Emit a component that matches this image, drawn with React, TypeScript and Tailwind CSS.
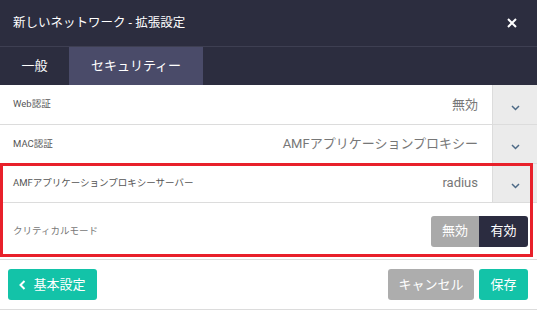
import React, { useState } from "react";

const font = { fontFamily: "Roboto, 'Noto Sans CJK JP', sans-serif" };

const Chevron: React.FC = () => (
  <svg width="9" height="6" viewBox="0 0 9 6" fill="none">
    <polyline points="1,1 4.5,4.5 8,1" stroke="#4d6a86" strokeWidth="1.5" />
  </svg>
);

const SelectRow: React.FC<{ label: string; value: string; h: string }> = ({ label, value, h }) => (
  <div className={`flex ${h} border-b border-[#dcdcdc]`}>
    <div className="flex-1 flex items-center justify-between pl-[13px] pr-[14px]">
      <span className="text-[9.5px] text-[#555]">{label}</span>
      <span className="text-[13px] text-[#777]">{value}</span>
    </div>
    <div className="w-[45px] bg-[#ebebeb] border-l border-[#dcdcdc] flex items-center justify-center pt-[6px]">
      <Chevron />
    </div>
  </div>
);

const App: React.FC = () => {
  const [tab, setTab] = useState(1);
  const [critical, setCritical] = useState(true);

  return (
    <div className="relative w-[537px] h-[310px] bg-white overflow-hidden" style={font}>
      <div className="h-[47px] bg-[#2c2d3f] border-b border-[#3e3f52] flex items-center justify-between pl-[13px] pr-[20px]">
        <span className="text-[12.5px] text-white">新しいネットワーク - 拡張設定</span>
        <svg width="10" height="10" viewBox="0 0 10 10">
          <path d="M1 1L9 9M9 1L1 9" stroke="white" strokeWidth="2" />
        </svg>
      </div>

      <div className="h-[38px] bg-[#2c2d3f] flex">
        {["一般", "セキュリティー"].map((t, i) => (
          <button
            key={t}
            onClick={() => setTab(i)}
            className={`h-full text-[13px] text-white ${i === 0 ? "w-[69px]" : "w-[134px]"} ${
              tab === i ? "bg-[#4a4b69]" : ""
            }`}
          >
            {t}
          </button>
        ))}
      </div>

      <SelectRow label="Web認証" value="無効" h="h-[40px]" />
      <SelectRow label="MAC認証" value="AMFアプリケーションプロキシー" h="h-[39px]" />
      <SelectRow label="AMFアプリケーションプロキシーサーバー" value="radius" h="h-[39px]" />

      <div className="h-[56px] flex items-center justify-between pl-[13px] pr-[9px]">
        <span className="text-[9.5px] text-[#777]">クリティカルモード</span>
        <div className="flex rounded-[3px] overflow-hidden h-[31px] text-[13px] text-white">
          <button
            onClick={() => setCritical(false)}
            className={`w-[48px] ${critical ? "bg-[#a9a9a9]" : "bg-[#2b2c40]"}`}
          >
            無効
          </button>
          <button
            onClick={() => setCritical(true)}
            className={`w-[49px] ${critical ? "bg-[#2b2c40]" : "bg-[#a9a9a9]"}`}
          >
            有効
          </button>
        </div>
      </div>

      <div className="h-[51px] border-t border-b border-[#dcdcdc] flex items-center justify-between pl-[8px] pr-[9px]">
        <button className="h-[31px] w-[89px] rounded-[3px] bg-[#13c3a8] text-white text-[13px] flex items-center justify-center gap-[7px]">
          <svg width="7" height="10" viewBox="0 0 7 10">
            <polyline points="5.5,1 1.5,5 5.5,9" fill="none" stroke="white" strokeWidth="2" />
          </svg>
          基本設定
        </button>
        <div className="flex gap-[5px]">
          <button className="h-[31px] w-[86px] rounded-[3px] bg-[#adadad] text-white text-[13px]">キャンセル</button>
          <button className="h-[31px] w-[49px] rounded-[3px] bg-[#13c3a8] text-white text-[13px]">保存</button>
        </div>
      </div>

      <div className="absolute left-0 top-[163px] w-[533px] h-[94px] border-[3px] border-[#e8202a] pointer-events-none" />
    </div>
  );
};

export default App;
